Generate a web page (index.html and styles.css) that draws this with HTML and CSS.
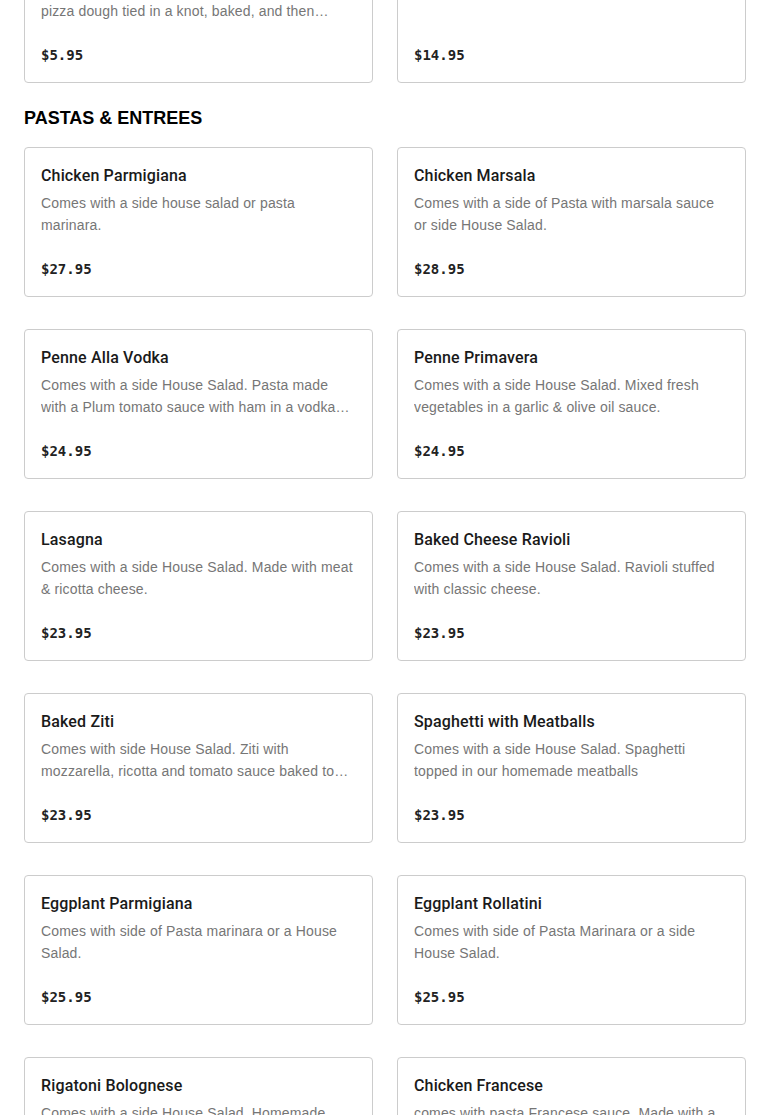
FILE: index.html
```html
<!DOCTYPE html>
<html lang="en">
<head>
<meta charset="utf-8">
<title>Menu</title>
<link rel="stylesheet" href="styles.css">
</head>
<body>
<main class="menu">
  <section class="section section-scrolled">
    <div class="grid">
      <article class="card">
        <h3 class="card-title">Garlic Knots</h3>
        <p class="card-desc">Six garlic knots made from our fresh homemade pizza dough tied in a knot, baked, and then topped with garlic butter.</p>
        <p class="card-price">$5.95</p>
      </article>
      <article class="card">
        <h3 class="card-title">Fried Calamari</h3>
        <p class="card-desc">Lightly fried, served with marinara sauce.</p>
        <p class="card-price">$14.95</p>
      </article>
    </div>
  </section>

  <section class="section">
    <h2 class="section-title">PASTAS &amp; ENTREES</h2>
    <div class="grid">
      <article class="card">
        <h3 class="card-title">Chicken Parmigiana</h3>
        <p class="card-desc">Comes with a side house salad or pasta marinara.</p>
        <p class="card-price">$27.95</p>
      </article>
      <article class="card">
        <h3 class="card-title">Chicken Marsala</h3>
        <p class="card-desc">Comes with a side of Pasta with marsala sauce or side House Salad.</p>
        <p class="card-price">$28.95</p>
      </article>
      <article class="card">
        <h3 class="card-title">Penne Alla Vodka</h3>
        <p class="card-desc">Comes with a side House Salad. Pasta made with a Plum tomato sauce with ham in a vodka cream sauce.</p>
        <p class="card-price">$24.95</p>
      </article>
      <article class="card">
        <h3 class="card-title">Penne Primavera</h3>
        <p class="card-desc">Comes with a side House Salad. Mixed fresh vegetables in a garlic &amp; olive oil sauce.</p>
        <p class="card-price">$24.95</p>
      </article>
      <article class="card">
        <h3 class="card-title">Lasagna</h3>
        <p class="card-desc">Comes with a side House Salad. Made with meat &amp; ricotta cheese.</p>
        <p class="card-price">$23.95</p>
      </article>
      <article class="card">
        <h3 class="card-title">Baked Cheese Ravioli</h3>
        <p class="card-desc">Comes with a side House Salad. Ravioli stuffed with classic cheese.</p>
        <p class="card-price">$23.95</p>
      </article>
      <article class="card">
        <h3 class="card-title">Baked Ziti</h3>
        <p class="card-desc">Comes with side House Salad. Ziti with mozzarella, ricotta and tomato sauce baked to perfection.</p>
        <p class="card-price">$23.95</p>
      </article>
      <article class="card">
        <h3 class="card-title">Spaghetti with Meatballs</h3>
        <p class="card-desc">Comes with a side House Salad. Spaghetti topped in our homemade meatballs</p>
        <p class="card-price">$23.95</p>
      </article>
      <article class="card">
        <h3 class="card-title">Eggplant Parmigiana</h3>
        <p class="card-desc">Comes with side of Pasta marinara or a House Salad.</p>
        <p class="card-price">$25.95</p>
      </article>
      <article class="card">
        <h3 class="card-title">Eggplant Rollatini</h3>
        <p class="card-desc">Comes with side of Pasta Marinara or a side House Salad.</p>
        <p class="card-price">$25.95</p>
      </article>
      <article class="card">
        <h3 class="card-title">Rigatoni Bolognese</h3>
        <p class="card-desc">Comes with a side House Salad. Homemade meat sauce with rigatoni pasta.</p>
        <p class="card-price">$24.95</p>
      </article>
      <article class="card">
        <h3 class="card-title">Chicken Francese</h3>
        <p class="card-desc">comes with pasta Francese sauce. Made with a lemon butter white wine sauce.</p>
        <p class="card-price">$27.95</p>
      </article>
    </div>
  </section>
</main>
</body>
</html>
```

FILE: styles.css
```css
* {
  box-sizing: border-box;
}

html, body {
  margin: 0;
  padding: 0;
  background: #ffffff;
}

body {
  font-family: "Liberation Sans", Arial, sans-serif;
  color: #1f1f1f;
}

.menu {
  padding: 0 24px 40px;
}

.section-scrolled {
  margin-top: -67px;
}

.section-title {
  margin: 23px 0 17px;
  font-family: "Liberation Sans", Arial, sans-serif;
  font-weight: 700;
  font-size: 18px;
  line-height: 24px;
  color: #000000;
}

.grid {
  display: grid;
  grid-template-columns: 1fr 1fr;
  column-gap: 24px;
  row-gap: 32px;
}

.card {
  border: 1px solid #cccccc;
  border-radius: 4px;
  padding: 17px 16px 16px;
  background: #ffffff;
}

.card-title {
  margin: 0;
  font-family: Roboto, "Liberation Sans", sans-serif;
  font-size: 16px;
  line-height: 22px;
  font-weight: 500;
  letter-spacing: 0.15px;
  color: #1a1a1a;
  white-space: nowrap;
  overflow: hidden;
  text-overflow: ellipsis;
}

.card-desc {
  margin: 5px 0 0;
  font-size: 14px;
  line-height: 22px;
  letter-spacing: 0.15px;
  color: #767676;
  min-height: 44px;
  display: -webkit-box;
  -webkit-box-orient: vertical;
  -webkit-line-clamp: 2;
  overflow: hidden;
}

.card-price {
  margin: 22px 0 0;
  font-family: "DejaVu Sans Mono", "Liberation Mono", monospace;
  font-weight: 700;
  font-size: 14px;
  line-height: 22px;
  color: #222222;
}
```
